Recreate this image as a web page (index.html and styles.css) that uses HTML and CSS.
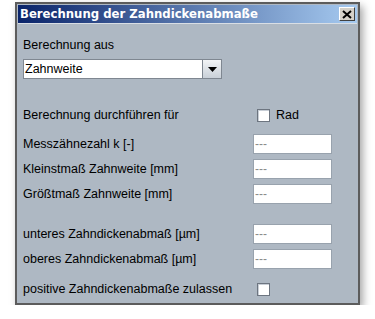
FILE: index.html
```html
<!DOCTYPE html>
<html lang="de">
  <head>
    <meta charset="UTF-8" />
    <title>Berechnung der Zahndickenabmaße</title>
    <link rel="stylesheet" href="styles.css">
  </head>
  <body>
    <div class="window">
      <div class="titlebar">
        <span class="title">Berechnung der Zahndickenabmaße</span>
        <span class="close">
          <svg width="10" height="9" viewBox="0 0 10 9">
            <path d="M1 1 L9 8 M9 1 L1 8" stroke="#000" stroke-width="2" fill="none"/>
          </svg>
        </span>
      </div>

      <div class="form">
        <div class="label first">Berechnung aus</div>
        <div class="combo">
          <span class="combo-text">Zahnweite</span>
          <span class="combo-btn">
            <svg width="9" height="5" viewBox="0 0 9 5"><path d="M0 0 H9 L4.5 5 Z" fill="#000"/></svg>
          </span>
        </div>

        <div class="row check-row top">
          <span class="label">Berechnung durchführen für</span>
          <label class="check"><span class="box"></span>Rad</label>
        </div>

        <div class="fields">
          <div class="row">
            <span class="label">Messzähnezahl k [-]</span>
            <input class="field" type="text" placeholder="---">
          </div>
          <div class="row">
            <span class="label">Kleinstmaß Zahnweite [mm]</span>
            <input class="field" type="text" placeholder="---">
          </div>
          <div class="row">
            <span class="label">Größtmaß Zahnweite [mm]</span>
            <input class="field" type="text" placeholder="---">
          </div>
        </div>

        <div class="fields second">
          <div class="row">
            <span class="label">unteres Zahndickenabmaß [µm]</span>
            <input class="field" type="text" placeholder="---">
          </div>
          <div class="row">
            <span class="label">oberes Zahndickenabmaß [µm]</span>
            <input class="field" type="text" placeholder="---">
          </div>
        </div>

        <div class="row check-row last">
          <span class="label">positive Zahndickenabmaße zulassen</span>
          <label class="check"><span class="box"></span></label>
        </div>
      </div>
    </div>
  </body>
</html>
```

FILE: styles.css
```css
body {
  margin: 0;
  background: #fff;
  font-family: "Liberation Sans", Arial, sans-serif;
  font-size: 12.5px;
  color: #000;
}
.window {
  margin: 2px 0 0 15px;
  width: 345px;
  height: 303px;
  box-sizing: border-box;
  border: 2px solid #5c5c5c;
  background: #aeb8c3;
  box-shadow: 3px 4px 8px rgba(0, 0, 0, 0.35);
}
.titlebar {
  height: 18px;
  margin: 1px 1px 0 1px;
  border-bottom: 1px solid #d9dee4;
  background: linear-gradient(to right, #0a246a, #a6caf0);
  display: flex;
  align-items: center;
  justify-content: space-between;
  padding: 0 2px 0 2px;
}
.title {
  color: #fff;
  font-family: "DejaVu Sans", sans-serif;
  font-weight: bold;
  font-size: 11.7px;
}
.close {
  width: 16px;
  height: 14px;
  box-sizing: border-box;
  background: #d4d0c8;
  border: 1px solid;
  border-color: #fff #404040 #404040 #fff;
  display: flex;
  align-items: center;
  justify-content: center;
}
.form {
  padding: 0 0 0 6px;
}
.label {
  line-height: 20px;
  white-space: nowrap;
}
.first {
  margin-top: 11px;
}
.combo {
  margin-top: 4px;
  width: 199px;
  height: 20px;
  box-sizing: border-box;
  border: 1px solid #7f8791;
  background: #fff;
  display: flex;
}
.combo-text {
  flex: 1;
  line-height: 18px;
  padding-left: 1px;
}
.combo-btn {
  width: 18px;
  border-left: 1px solid #7f8791;
  background: linear-gradient(#f2f4f6, #c9d0d8);
  display: flex;
  align-items: center;
  justify-content: center;
}
.row {
  display: grid;
  grid-template-columns: 230px 79px;
  align-items: center;
  height: 20px;
}
.top {
  margin-top: 26px;
}
.fields {
  margin-top: 9px;
  display: flex;
  flex-direction: column;
  gap: 5px;
}
.fields.second {
  margin-top: 20px;
}
.last {
  margin-top: 10px;
}
.check {
  display: flex;
  align-items: center;
  gap: 6px;
  padding-left: 4px;
}
.box {
  width: 13px;
  height: 13px;
  box-sizing: border-box;
  background: #fff;
  border: 1px solid #6d7580;
  box-shadow: inset 1px 1px 0 #c8ced6;
}
.field {
  width: 79px;
  height: 20px;
  box-sizing: border-box;
  margin: 0;
  padding: 0 1px;
  border: 1px solid #98a2ad;
  background: #fff;
  font-family: "Liberation Sans", Arial, sans-serif;
  font-size: 12px;
  outline: none;
}
.field::placeholder {
  color: #8a8a8a;
}
```
